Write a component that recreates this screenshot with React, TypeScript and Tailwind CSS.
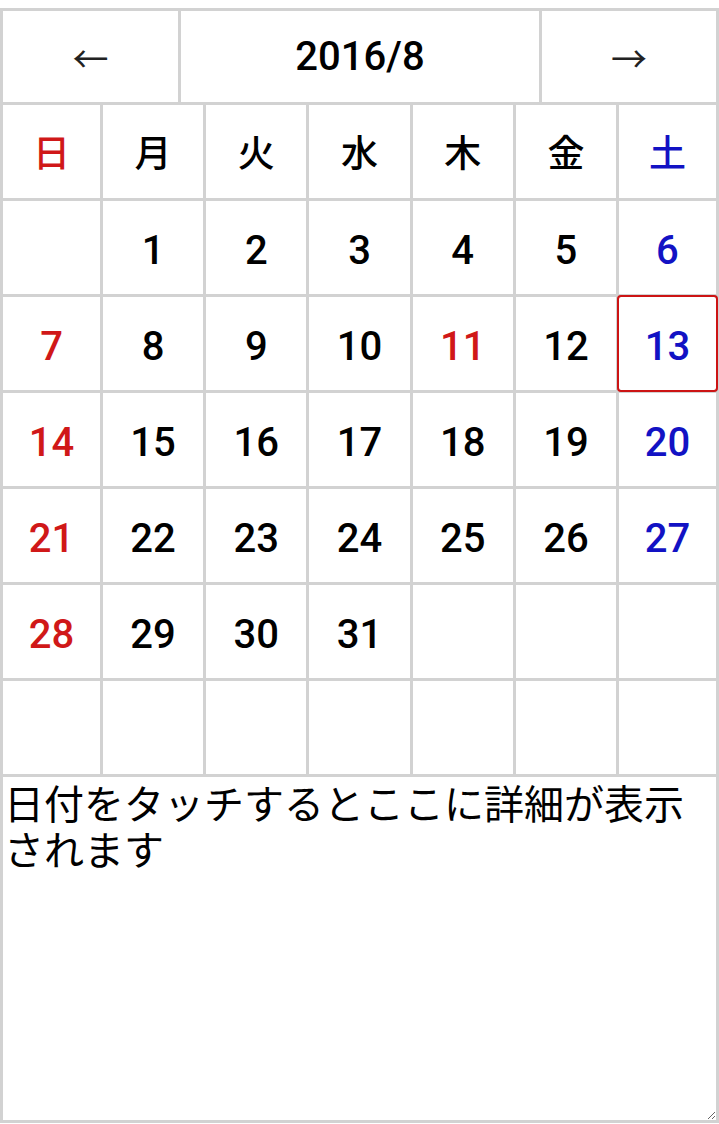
import React from "react";

const weeks: (number | null)[][] = [
  [null, 1, 2, 3, 4, 5, 6],
  [7, 8, 9, 10, 11, 12, 13],
  [14, 15, 16, 17, 18, 19, 20],
  [21, 22, 23, 24, 25, 26, 27],
  [28, 29, 30, 31, null, null, null],
  [null, null, null, null, null, null, null],
];

const days = ["日", "月", "火", "水", "木", "金", "土"];

function colorFor(col: number, d: number | null) {
  if (d === 11) return "text-[#d01818]";
  if (col === 0) return "text-[#d01818]";
  if (col === 6) return "text-[#1212c4]";
  return "text-black";
}

export default function App() {
  return (
    <div className="w-[719px] h-[1124px] bg-white pt-[8px] font-['Roboto','Noto_Sans_CJK_JP',sans-serif]">
      <div className="flex flex-col gap-[3px] bg-[#d2d2d2] px-[3px] pt-[3px]">
        <div className="grid grid-cols-[175px_1fr_174px] gap-[3px] h-[91px]">
          <div className="bg-white flex items-center justify-center text-[36px] text-[#222] font-['Noto_Sans_CJK_JP',sans-serif]">←</div>
          <div className="bg-white flex items-center justify-center text-[40px] font-medium text-black">2016/8</div>
          <div className="bg-white flex items-center justify-center text-[36px] text-[#222] font-['Noto_Sans_CJK_JP',sans-serif]">→</div>
        </div>
        <div className="grid grid-cols-[97px_repeat(5,1fr)_97px] gap-[3px]">
          {days.map((d, i) => (
            <div
              key={d}
              className={`bg-white h-[93px] flex items-center justify-center text-[37px] font-medium font-['Noto_Sans_CJK_JP',sans-serif] ${i === 0 ? "text-[#d01818]" : i === 6 ? "text-[#1212c4]" : "text-black"}`}
            >
              {d}
            </div>
          ))}
          {weeks.flatMap((w, r) =>
            w.map((d, c) => (
              <div
                key={`${r}-${c}`}
                className={`bg-white h-[93px] pt-[6px] flex items-center justify-center text-[40px] font-medium ${colorFor(c, d)} ${d === 13 ? "outline-2 outline-[#cc1414] rounded-[2px] relative z-10" : ""}`}
              >
                {d ?? ""}
              </div>
            ))
          )}
        </div>
      </div>
      <textarea
        readOnly
        defaultValue="日付をタッチするとここに詳細が表示されます"
        className="block w-[719px] h-[349px] border-[3px] border-[#d2d2d2] bg-white px-[1px] pt-[2px] text-[40px] leading-[46px] text-black font-['Noto_Sans_CJK_JP',sans-serif] outline-none resize-y"
      />
    </div>
  );
}
